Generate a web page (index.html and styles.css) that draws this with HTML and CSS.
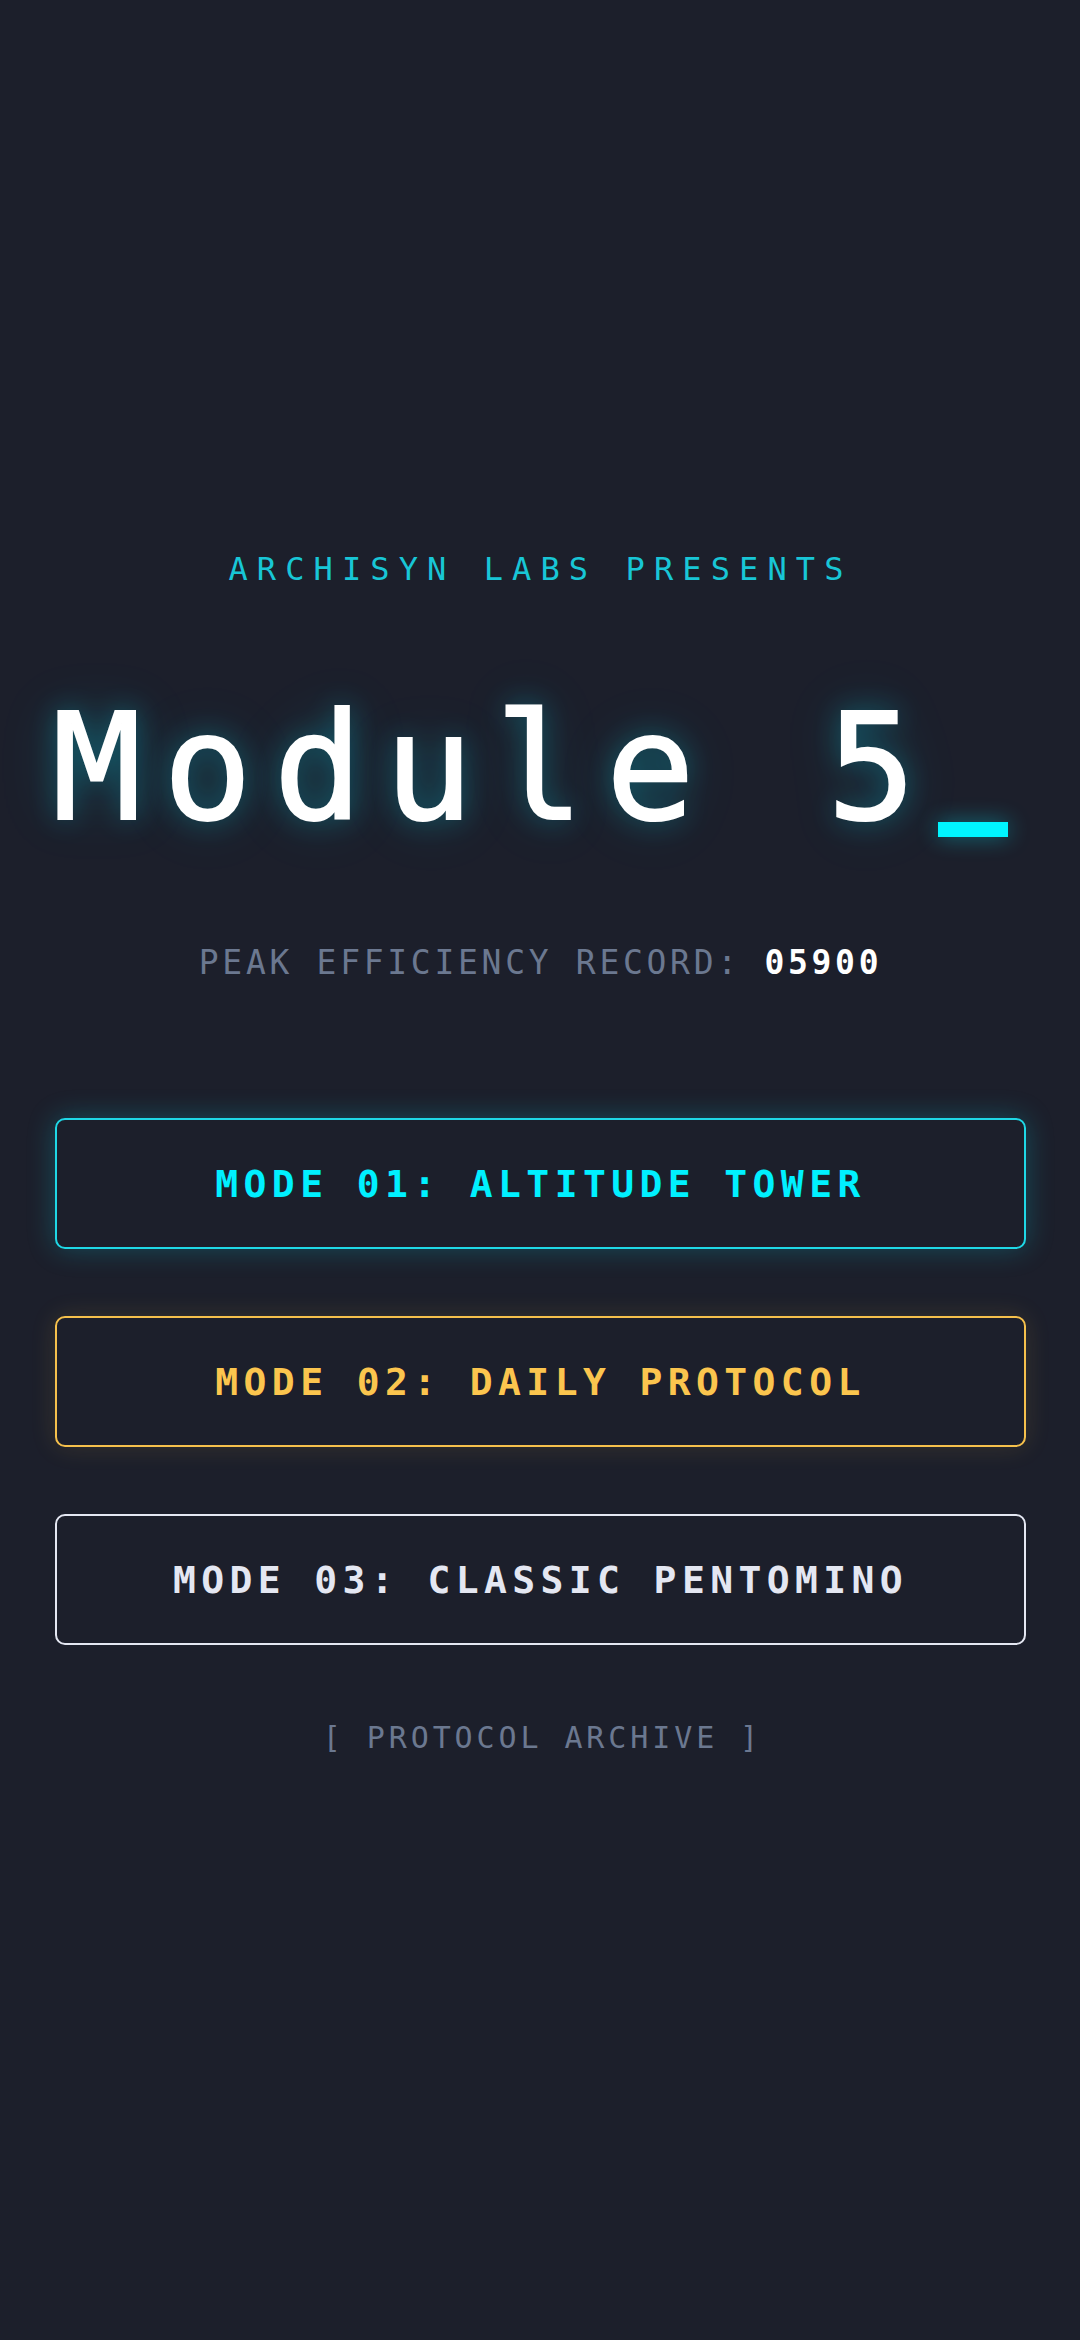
FILE: index.html
```html
<!DOCTYPE html>
<html lang="en">
<head>
<meta charset="utf-8">
<meta name="viewport" content="width=1080">
<title>Module 5</title>
<link rel="stylesheet" href="styles.css">
</head>
<body>
<main class="screen">
  <p class="presenter">ARCHISYN LABS PRESENTS</p>
  <h1 class="title">Module 5<span class="cursor"></span></h1>
  <p class="record">PEAK EFFICIENCY RECORD: <span class="record-value">05900</span></p>
  <nav class="modes">
    <button class="mode mode-cyan">MODE 01: ALTITUDE TOWER</button>
    <button class="mode mode-amber">MODE 02: DAILY PROTOCOL</button>
    <button class="mode mode-white">MODE 03: CLASSIC PENTOMINO</button>
  </nav>
  <p class="archive">[ PROTOCOL ARCHIVE ]</p>
</main>
</body>
</html>
```

FILE: styles.css
```css
html, body {
  margin: 0;
  padding: 0;
  background: #1c1f2b;
}

body {
  width: 1080px;
  height: 2340px;
  overflow: hidden;
  font-family: "DejaVu Sans Mono", "Liberation Mono", monospace;
}

.screen {
  display: flex;
  flex-direction: column;
  align-items: center;
  padding: 553px 54px 0 55px;
}

.presenter {
  margin: 0;
  font-size: 32px;
  line-height: 32px;
  letter-spacing: 9.1px;
  color: #18c6d6;
}

.title {
  margin: 109px 0 0 0;
  font-size: 148px;
  line-height: 148px;
  font-weight: normal;
  letter-spacing: 21.6px;
  color: #ffffff;
  -webkit-text-stroke: 2px #ffffff;
  text-shadow: 0 0 28px rgba(0, 230, 255, 0.32), 0 0 60px rgba(0, 230, 255, 0.18);
  white-space: nowrap;
}

.cursor {
  display: inline-block;
  width: 70px;
  height: 15px;
  background: #00f5ff;
  vertical-align: -18px;
  box-shadow: 0 0 22px rgba(0, 240, 255, 0.4);
  margin-right: 21px;
}

.record {
  margin: 104px 0 0 0;
  font-size: 33px;
  line-height: 33px;
  letter-spacing: 3.7px;
  color: #6b7890;
}

.record-value {
  color: #ffffff;
  font-weight: bold;
}

.modes {
  align-self: stretch;
  display: flex;
  flex-direction: column;
  gap: 67px;
  margin-top: 139px;
}

.mode {
  box-sizing: border-box;
  height: 131px;
  width: 100%;
  display: flex;
  align-items: center;
  justify-content: center;
  background: #1c1f2b;
  border: 2px solid;
  border-radius: 10px;
  font-family: "DejaVu Sans Mono", "Liberation Mono", monospace;
  font-size: 38px;
  line-height: 38px;
  font-weight: bold;
  letter-spacing: 5.4px;
  padding: 0;
}

.mode-cyan {
  color: #00f0ff;
  border-color: #1fd8e6;
  box-shadow: 0 0 28px rgba(0, 220, 240, 0.25);
}

.mode-amber {
  color: #fbc54e;
  border-color: #f5c04c;
  box-shadow: 0 0 26px rgba(250, 190, 70, 0.13);
}

.mode-white {
  color: #e4e7f2;
  border-color: #e4e7f2;
}

.archive {
  margin: 78px 0 0 0;
  font-size: 30px;
  line-height: 30px;
  letter-spacing: 3.9px;
  padding-left: 3.9px;
  color: #6b7890;
}
```
